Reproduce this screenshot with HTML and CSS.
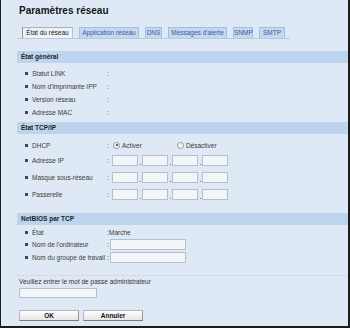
FILE: index.html
```html
<!DOCTYPE html>
<html lang="fr">
<head>
  <meta charset="UTF-8">
  <title>Paramètres réseau</title>
  <link rel="stylesheet" href="styles.css">
</head>
<body>
  <div class="frame">
    <h1 class="title">Paramètres réseau</h1>

    <div class="tabs">
      <a class="tab active" href="#">État du réseau</a>
      <a class="tab" href="#">Application réseau</a>
      <a class="tab" href="#">DNS</a>
      <a class="tab" href="#">Messages d'alerte</a>
      <a class="tab" href="#">SNMP</a>
      <a class="tab" href="#">SMTP</a>
    </div>

    <div class="section general">
      <div class="section-head">État général</div>
      <ul class="rows">
        <li class="row"><span class="bullet"></span><span class="label">Statut LINK</span><span class="colon">:</span></li>
        <li class="row"><span class="bullet"></span><span class="label">Nom d'imprimante IPP</span><span class="colon">:</span></li>
        <li class="row"><span class="bullet"></span><span class="label">Version réseau</span><span class="colon">:</span></li>
        <li class="row"><span class="bullet"></span><span class="label">Adresse MAC</span><span class="colon">:</span></li>
      </ul>
    </div>

    <div class="section tcpip">
      <div class="section-head">État TCP/IP</div>
      <ul class="rows">
        <li class="row dhcp">
          <span class="bullet"></span><span class="label">DHCP</span><span class="colon">:</span>
          <span class="radio checked"></span><span class="radio-text">Activer</span>
          <span class="radio second"></span><span class="radio-text">Désactiver</span>
        </li>
        <li class="row ip-row">
          <span class="bullet"></span><span class="label">Adresse IP</span><span class="colon">:</span>
          <span class="ip"><span class="box"></span><span class="dot"></span><span class="box"></span><span class="dot"></span><span class="box"></span><span class="dot"></span><span class="box"></span></span>
        </li>
        <li class="row ip-row">
          <span class="bullet"></span><span class="label">Masque sous-réseau</span><span class="colon">:</span>
          <span class="ip"><span class="box"></span><span class="dot"></span><span class="box"></span><span class="dot"></span><span class="box"></span><span class="dot"></span><span class="box"></span></span>
        </li>
        <li class="row ip-row">
          <span class="bullet"></span><span class="label">Passerelle</span><span class="colon">:</span>
          <span class="ip"><span class="box"></span><span class="dot"></span><span class="box"></span><span class="dot"></span><span class="box"></span><span class="dot"></span><span class="box"></span></span>
        </li>
      </ul>
    </div>

    <div class="section netbios">
      <div class="section-head">NetBIOS par TCP</div>
      <ul class="rows">
        <li class="row state"><span class="bullet"></span><span class="label">État</span><span class="colon">:</span><span class="value">Marche</span></li>
        <li class="row field"><span class="bullet"></span><span class="label">Nom de l'ordinateur</span><span class="colon">:</span><span class="text-input"></span></li>
        <li class="row field"><span class="bullet"></span><span class="label">Nom du groupe de travail</span><span class="colon">:</span><span class="text-input"></span></li>
      </ul>
    </div>

    <div class="password">
      <p class="password-text">Veuillez entrer le mot de passe administrateur</p>
      <span class="password-input"></span>
      <div class="buttons">
        <button class="btn">OK</button>
        <button class="btn">Annuler</button>
      </div>
    </div>
  </div>
</body>
</html>
```

FILE: styles.css
```css
* {
  margin: 0;
  padding: 0;
  box-sizing: border-box;
}

body {
  font-family: "Liberation Sans", Arial, sans-serif;
  font-size: 6.5px;
  color: #333;
  background: #dfe9f5;
}

.frame {
  width: 350px;
  height: 328px;
  padding-left: 16px;
  background: #dfe9f5;
  border-left: 1px solid #1c1c1c;
  border-right: 2px solid #1c1c1c;
  border-bottom: 2px solid #1c1c1c;
  overflow: hidden;
}

.title {
  font-size: 10px;
  line-height: 12px;
  font-weight: bold;
  color: #151515;
  padding: 5px 0 0 2px;
}

/* Tabs */
.tabs {
  display: flex;
  align-items: flex-end;
  gap: 6px;
  width: 273px;
  height: 12px;
  margin-top: 10px;
  padding-left: 5px;
  border-bottom: 1px solid #b7c9dd;
}

.tab {
  height: 11px;
  line-height: 9px;
  text-align: center;
  text-decoration: none;
  white-space: nowrap;
  color: #3a5ba0;
  background: #c4d8ef;
  border: 1px solid #a3bfdf;
  border-bottom: none;
}

.tab:nth-child(1) { width: 51px; }
.tab:nth-child(2) { width: 60px; }
.tab:nth-child(3) { width: 17px; }
.tab:nth-child(4) { width: 59px; }
.tab:nth-child(5) { width: 20px; }
.tab:nth-child(6) { width: 26px; }

.tab.active {
  color: #222;
  background: #edf2f8;
  border-color: #b9c4cf;
  border-left-color: #8d98a4;
  border-top-color: #a8b2bd;
}

/* Sections */
.section-head {
  height: 12px;
  line-height: 12px;
  padding-left: 4px;
  font-weight: bold;
  color: #1d1d1d;
  background: #bcd4ee;
}

.general {
  margin-top: 12px;
}

.general .rows {
  padding-top: 4px;
}

.tcpip {
  margin-top: 3px;
}

.tcpip .rows {
  padding-top: 4px;
}

.netbios {
  margin-top: 10px;
}

.netbios .rows {
  padding-top: 1px;
}

.rows {
  list-style: none;
}

.row {
  display: flex;
  align-items: center;
  height: 13px;
  padding-left: 8px;
  color: #3a3a3a;
}

.row.dhcp {
  height: 14px;
}

.row.ip-row {
  height: 17px;
}

.row.state {
  height: 12px;
}

.bullet {
  width: 3px;
  height: 3px;
  margin-right: 4px;
  background: #2f4676;
}

.label {
  width: 75px;
  white-space: nowrap;
}

.colon {
  width: 2px;
}

/* DHCP radios */
.radio {
  width: 7px;
  height: 7px;
  margin-left: 4px;
  margin-right: 2px;
  border: 1px solid #8a96a3;
  border-radius: 50%;
  background: #f4f7fa;
  position: relative;
}

.radio.checked::after {
  content: '';
  position: absolute;
  top: 1.5px;
  left: 1.5px;
  width: 2px;
  height: 2px;
  border-radius: 50%;
  background: #333;
}

.radio.second {
  margin-left: 35px;
}

/* IP boxes */
.ip {
  display: flex;
  align-items: flex-end;
  margin-left: 3px;
}

.box {
  width: 26px;
  height: 11px;
  background: #f3f6f9;
  border: 1px solid #b3c0cd;
}

.dot {
  display: flex;
  justify-content: center;
  width: 4px;
  height: 11px;
  align-items: flex-end;
  padding-bottom: 1px;
}

.dot::after {
  content: '';
  width: 1px;
  height: 1px;
  background: #777;
}

/* NetBIOS */
.value {
  margin-left: 0;
}

.text-input {
  width: 76px;
  height: 11px;
  margin-left: 1px;
  background: #f3f6f9;
  border: 1px solid #b3c0cd;
}

/* Password + buttons */
.password {
  margin-top: 11px;
  border-top: 1px dotted #c2d1e2;
  padding-left: 2px;
}

.password-text {
  margin-top: 2px;
  line-height: 8px;
  color: #333;
}

.password-input {
  display: block;
  width: 78px;
  height: 10px;
  margin-top: 2px;
  background: #f3f6f9;
  border: 1px solid #b3c0cd;
}

.buttons {
  display: flex;
  gap: 4px;
  margin-top: 12px;
}

.btn {
  width: 60px;
  height: 11px;
  font-family: "Liberation Sans", Arial, sans-serif;
  font-size: 6.5px;
  font-weight: bold;
  line-height: 9px;
  color: #111;
  background: linear-gradient(#ffffff, #e4e4e4);
  border: 1px solid #b8b8b8;
  border-bottom-color: #7d7d7d;
  border-right-color: #999;
}
```
